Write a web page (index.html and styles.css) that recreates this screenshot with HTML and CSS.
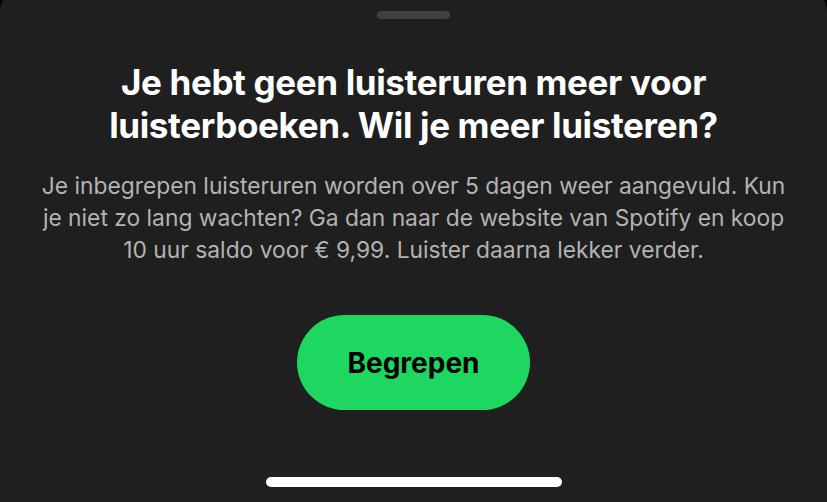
FILE: index.html
```html
<!DOCTYPE html>
<html lang="nl">
<head>
  <meta charset="UTF-8">
  <title>Luisteruren op</title>
  <link rel="stylesheet" href="styles.css">
</head>
<body>
  <div class="sheet">
    <div class="grabber"></div>

    <h1 class="title">Je hebt geen luisteruren meer voor<br>luisterboeken. Wil je meer luisteren?</h1>

    <p class="info">Je inbegrepen luisteruren worden over 5 dagen weer aangevuld. Kun<br>je niet zo lang wachten? Ga dan naar de website van Spotify en koop<br>10 uur saldo voor € 9,99. Luister daarna lekker verder.</p>

    <button class="ok">Begrepen</button>

    <div class="home-bar"></div>
  </div>
</body>
</html>
```

FILE: styles.css
```css
body {
  background-color: #000;
  font-family: Inter, "Noto Sans", sans-serif;
  margin: 0;
  height: 502px;
  overflow: hidden;
}
.sheet {
  background-color: #1f1f1f;
  height: 502px;
  border-top-left-radius: 4px 14px;
  border-top-right-radius: 4px 14px;
  display: flex;
  flex-direction: column;
  align-items: center;
}
.grabber {
  width: 73px;
  height: 8px;
  border-radius: 4px;
  background-color: #3f3f3f;
  margin-top: 11px;
}
.title {
  color: #fff;
  font-size: 35px;
  font-weight: 700;
  line-height: 43px;
  letter-spacing: -0.35px;
  text-align: center;
  white-space: nowrap;
  margin: 42px 0 0;
}
.info {
  color: #b3b3b3;
  font-size: 22.8px;
  line-height: 32px;
  text-align: center;
  white-space: nowrap;
  margin: 23px 0 0;
}
.ok {
  width: 233px;
  height: 95px;
  margin-top: 49px;
  border: none;
  border-radius: 48px;
  background-color: #1ed760;
  color: #000;
  font-family: inherit;
  font-size: 28px;
  font-weight: 700;
  cursor: pointer;
}
.home-bar {
  width: 296px;
  height: 10px;
  border-radius: 5px;
  background-color: #fff;
  margin-top: auto;
  margin-bottom: 15px;
}
```
